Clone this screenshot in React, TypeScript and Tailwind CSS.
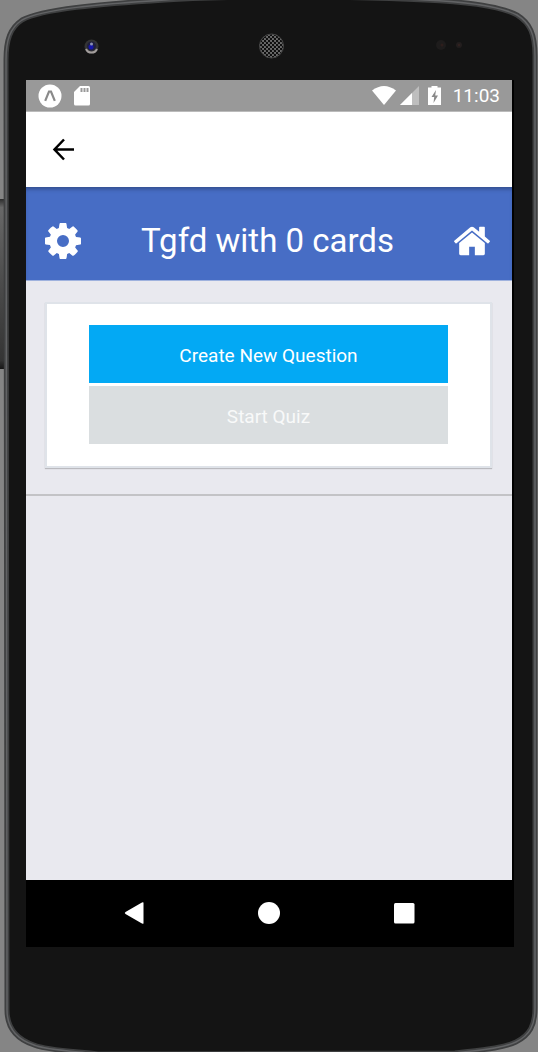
import type { ReactNode } from 'react';

const BODY =
  'M6 60 C6 40 10 28 22 20 C42 9 100 4 165 0 C220 -4 350 -4 425 0 C470 2 502 7 517 15 C530 23 535 34 535 56 L535 1008 C535 1025 530 1035 516 1042 C504 1048 480 1050 455 1053 L98 1054 C70 1051 46 1050 34 1045 C16 1039 7 1028 7 1010 Z';

function DeviceBody() {
  return (
    <svg
      className="absolute inset-0 h-full w-full"
      viewBox="0 0 538 1052"
      preserveAspectRatio="none"
      aria-hidden="true"
    >
      <defs>
        <linearGradient id="keys" x1="0" y1="0" x2="0" y2="1">
          <stop offset="0" stopColor="#2c2c2c" />
          <stop offset="0.05" stopColor="#686868" />
          <stop offset="0.5" stopColor="#4b4b4b" />
          <stop offset="0.95" stopColor="#343434" />
          <stop offset="1" stopColor="#161616" />
        </linearGradient>
        <pattern id="mesh" width="4" height="4" patternUnits="userSpaceOnUse">
          <rect width="4" height="4" fill="#6c6c6c" />
          <circle cx="1" cy="1" r="1.200" fill="#0c0c0c" />
          <circle cx="3" cy="3" r="1.200" fill="#0c0c0c" />
        </pattern>
      </defs>
      <rect y="199" width="5" height="170" fill="url(#keys)" />
      <path d={BODY} fill="#141414" stroke="#3f4041" strokeWidth="5" />
      <path d={BODY} fill="none" stroke="#626365" strokeWidth="1.500" />
      <circle cx="91.500" cy="46.500" r="7" fill="#343434" />
      <path d="M86 49a6 6 0 0 0 11 0" fill="none" stroke="#a29d9c" strokeWidth="2" />
      <circle cx="91.500" cy="46" r="4.500" fill="#20203e" />
      <circle cx="91" cy="47" r="2.500" fill="#1616a8" />
      <circle cx="91.500" cy="44" r="1.500" fill="#8d92b4" />
      <circle cx="271.500" cy="46" r="12" fill="url(#mesh)" stroke="#464646" />
      <circle cx="441" cy="45" r="5" fill="#1e1c1c" />
      <circle cx="442" cy="45" r="1.500" fill="#2e1e1c" />
      <circle cx="459" cy="45" r="3" fill="#231e1e" />
      <circle cx="459" cy="45" r="1" fill="#372321" />
    </svg>
  );
}

function StatusBar() {
  return (
    <div className="flex h-8 items-center border-b border-[#bbb] bg-[#999] px-3 text-white">
      <svg className="h-6 w-6" viewBox="0 0 24 24" aria-hidden="true">
        <circle cx="12" cy="12" r="11.500" fill="#fff" />
        <path d="M7.200 16.800 L11 7.500 H13 L16.800 16.800" fill="none" stroke="#8a8a8a" strokeWidth="2.200" />
      </svg>
      <svg className="ml-3 h-5 w-4" viewBox="0 0 16 20" aria-hidden="true">
        <path d="M6 0H14.500Q16 0 16 1.500V18Q16 19.500 14.500 19.500H1.500Q0 19.500 0 18V6Z" fill="#fff" />
        <path d="M6.500 2h2v4h-2zM9.500 2h2v4h-2zM12.500 2h2v4h-2z" fill="#999" />
      </svg>
      <div className="ml-auto flex items-center">
        <svg className="h-5 w-6" viewBox="0 0 24 20" aria-hidden="true">
          <path d="M0 4.500Q12 -4.500 24 4.500L12 19Z" fill="#fff" />
        </svg>
        <svg className="ml-1 h-5 w-5" viewBox="0 0 20 20" aria-hidden="true">
          <path d="M0 19 19 0V19Z" fill="#bebebe" />
          <path d="M0 19 12 7V19Z" fill="#fff" />
        </svg>
        <svg className="ml-2 h-5 w-[13px]" viewBox="0 0 13 20" aria-hidden="true">
          <path d="M3.500 0h6v1.500H13V19H0V1.500h3.500z" fill="#fff" />
          <path d="M8 4 3.500 11H6.200L5.500 17 10 9.500H7.200Z" fill="#8a8a8a" />
        </svg>
        <time className="ml-3 text-[19px] leading-6">11:03</time>
      </div>
    </div>
  );
}

function IconButton({ label, children }: { label: string; children: ReactNode }) {
  return (
    <button type="button" aria-label={label} className="flex w-9 items-center justify-center">
      {children}
    </button>
  );
}

function TitleBar() {
  return (
    <header className="flex h-[94px] items-center justify-between border-b border-[#9fb2de] bg-[#476dc5] pt-[14px] pr-[22px] pl-[19px] text-white shadow-[inset_0_4px_4px_-2px_rgba(0,0,0,0.3)]">
      <IconButton label="Settings">
        <svg className="h-9 w-9" viewBox="0 128 1536 1536" fill="currentColor" aria-hidden="true">
          <path d="M1024 896q0-106-75-181t-181-75-181 75-75 181 75 181 181 75 181-75 75-181zm512-109v222q0 12-8 23t-20 13l-185 28q-19 54-39 91 35 50 107 138 10 12 10 25t-9 23q-27 37-99 108t-94 71q-12 0-26-9l-138-108q-44 23-91 38-16 136-29 186-7 28-36 28h-222q-14 0-24.500-8.500t-11.500-21.500l-28-184q-49-16-90-37l-141 107q-10 9-25 9-14 0-25-11-126-114-165-168-7-10-7-23 0-12 8-23 15-21 51-66.500t54-70.500q-27-50-41-99l-183-27q-13-2-21-12.500t-8-23.500v-222q0-12 8-23t19-13l186-28q14-46 39-92-40-57-107-138-10-12-10-24 0-10 9-23 26-36 98.500-107.500t94.500-71.500q13 0 26 10l138 107q44-23 91-38 16-136 29-186 7-28 36-28h222q14 0 24.500 8.500t11.500 21.500l28 184q49 16 90 37l142-107q9-9 24-9 13 0 25 10 129 119 165 170 7 8 7 22 0 12-8 23-15 21-51 66.500t-54 70.500q26 50 41 98l183 28q13 2 21 12.500t8 23.500z" />
        </svg>
      </IconButton>
      <h1 className="text-[33px] leading-10">Tgfd with 0 cards</h1>
      <IconButton label="Home">
        <svg className="h-[30px] w-9" viewBox="24 253 1616 1283" fill="currentColor" aria-hidden="true">
          <path d="M1408 992v480q0 26-19 45t-45 19h-384v-384h-256v384h-384q-26 0-45-19t-19-45v-480q0-1 .5-3t.5-3l575-474 575 474q1 2 1 6zm223-69l-62 74q-8 9-21 11h-3q-13 0-21-7l-692-577-692 577q-12 8-24 7-13-2-21-11l-62-74q-8-10-7-23.500t11-21.500l719-599q32-26 76-26t76 26l244 204v-195q0-14 9-23t23-9h192q14 0 23 9t9 23v408l219 182q10 8 11 21.500t-7 23.500z" />
        </svg>
      </IconButton>
    </header>
  );
}

function NavigationBar() {
  return (
    <nav className="flex h-[67px] items-center justify-center gap-[99px] bg-black pr-[3px] pb-[2px]">
      <button type="button" aria-label="Back" className="w-9">
        <svg className="mx-auto h-6 w-6" viewBox="0 0 24 24" aria-hidden="true">
          <path d="M21.500 1.500V22.500Q20.500 23 19.500 22.300L3.500 13Q2 12 3.500 11L19.500 1.700Q20.500 1 21.500 1.500Z" fill="#fff" />
        </svg>
      </button>
      <button type="button" aria-label="Home screen" className="w-9">
        <svg className="mx-auto h-6 w-6" viewBox="0 0 24 24" aria-hidden="true">
          <circle cx="12" cy="12" r="11" fill="#fff" />
        </svg>
      </button>
      <button type="button" aria-label="Recent apps" className="w-9">
        <svg className="mx-auto h-6 w-6" viewBox="0 0 24 24" aria-hidden="true">
          <rect x="2" y="2" width="20.500" height="20.500" rx="1.500" fill="#fff" />
        </svg>
      </button>
    </nav>
  );
}

export default function App() {
  return (
    <div className="relative flex min-h-screen flex-col bg-[#858585] font-['Roboto',sans-serif]">
      <DeviceBody />
      <div className="relative mt-20 mr-6 mb-[105px] ml-[26px] flex grow flex-col bg-black">
        <div className="mr-[2px] flex grow flex-col bg-[#e9e9ef]">
          <StatusBar />
          <div className="flex h-[75px] items-center bg-white px-[26px]">
            <button type="button" aria-label="Go back">
              <svg className="h-6 w-6" viewBox="0 0 24 24" fill="none" stroke="#000" strokeWidth="2.500" aria-hidden="true">
                <path d="M22 11.500H3M12 1.500 2.500 11.500 12 21.500" />
              </svg>
            </button>
          </div>
          <TitleBar />
          <main>
            <section className="mr-5 ml-[19px] mt-[21px] flex flex-col gap-[3px] border-2 border-[#dfe3e9] bg-white px-[42px] pt-[21px] pb-[22px] shadow-[0_1px_1px_rgba(0,0,0,0.2)]">
              <button type="button" className="h-[58px] bg-[#03a9f4] pt-[3px] text-[19px] leading-6 text-white">
                Create New Question
              </button>
              <button type="button" disabled className="h-[58px] bg-[#dadee0] pt-[3px] text-[19px] leading-6 text-[#f8f9f9]">
                Start Quiz
              </button>
            </section>
            <hr className="mt-[26px] border-t-2 border-[#c3c3c6]" />
          </main>
        </div>
        <NavigationBar />
      </div>
    </div>
  );
}
